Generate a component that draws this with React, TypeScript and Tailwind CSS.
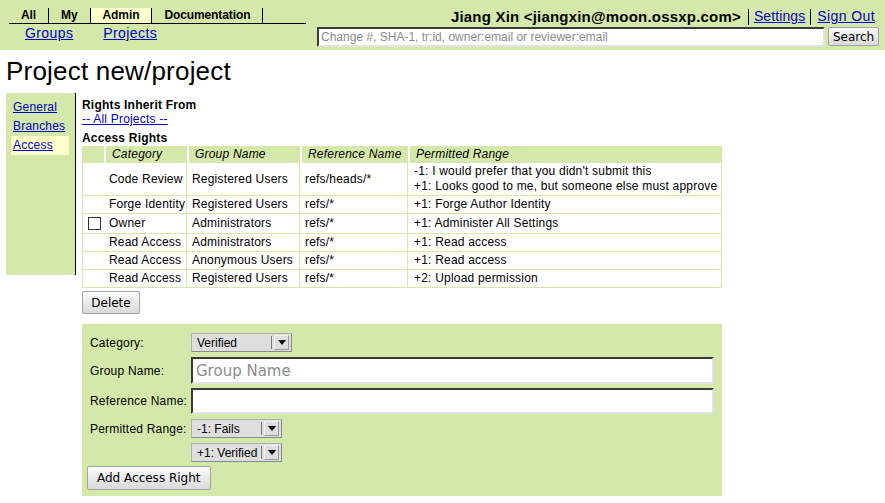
import React from "react";

const TABS = [
  { label: "All" },
  { label: "My" },
  { label: "Admin", active: true },
  { label: "Documentation" },
];

const RIGHTS = [
  { cat: "Code Review", group: "Registered Users", ref: "refs/heads/*", range: ["-1: I would prefer that you didn't submit this", "+1: Looks good to me, but someone else must approve"] },
  { cat: "Forge Identity", group: "Registered Users", ref: "refs/*", range: ["+1: Forge Author Identity"] },
  { cat: "Owner", group: "Administrators", ref: "refs/*", range: ["+1: Administer All Settings"], check: true },
  { cat: "Read Access", group: "Administrators", ref: "refs/*", range: ["+1: Read access"] },
  { cat: "Read Access", group: "Anonymous Users", ref: "refs/*", range: ["+1: Read access"] },
  { cat: "Read Access", group: "Registered Users", ref: "refs/*", range: ["+2: Upload permission"] },
];

const btn =
  "rounded-[2px] border border-[#a4a4a4] bg-linear-to-b from-[#fbfbfb] to-[#d9d9d9] font-['DejaVu_Sans',sans-serif] text-[12px] tracking-normal text-black";
const inset =
  "border-2 border-t-[#3a3a3a] border-l-[#3a3a3a] border-b-[#e2e2e2] border-r-[#e2e2e2] bg-white outline-none";

function FakeSelect({ label, className }: { label: string; className: string }) {
  return (
    <div className={`flex items-center border border-[#b0b0b0] border-b-[#8a8a8a] border-r-[#8a8a8a] bg-[#dedede] text-[12px] tracking-normal ${className}`}>
      <span className="flex-1 whitespace-nowrap pl-[5px]">{label}</span>
      <span className="h-[13px] w-px bg-[#7a7a7a]" />
      <span className="mx-[2px] flex h-[15px] w-[15px] items-center justify-center border border-[#f2f2f2] border-b-[#9a9a9a] border-r-[#9a9a9a]">
        <span className="h-0 w-0 border-x-[4px] border-t-[5px] border-x-transparent border-t-black" />
      </span>
    </div>
  );
}

export default function App() {
  return (
    <div className="min-h-screen bg-white font-['Liberation_Sans',Arial,sans-serif] text-black">
      {/* top header */}
      <div className="flex h-[50px] justify-between bg-[#d4e9a9]">
        <div className="pl-[9px] pt-[8px]">
          <div className="flex w-[297px] border-b border-black">
            {TABS.map(t => (
              <span
                key={t.label}
                className={`h-[15px] border-r border-black px-3 text-[12px] font-bold leading-[15px] tracking-[-0.1px] ${t.active ? "bg-[#ffffcc]" : ""}`}
              >
                {t.label}
              </span>
            ))}
          </div>
          <div className="mt-[1px] flex gap-[30px] pl-[16px] text-[14px] leading-[17px] tracking-[0.4px]">
            <a className="text-[#0000cc] underline">Groups</a>
            <a className="text-[#0000cc] underline">Projects</a>
          </div>
        </div>
        <div className="flex flex-col items-end pr-[6px] pt-[8px]">
          <div className="flex h-[17px] items-center pr-[4px] text-[14px] leading-[17px]">
            <span className="text-[15px] font-bold tracking-[0.2px]">Jiang Xin &lt;jiangxin@moon.ossxp.com&gt;</span>
            <span className="ml-[7px] h-[16px] w-px bg-black" />
            <a className="ml-[5px] text-[#0000cc] underline tracking-[0.1px]">Settings</a>
            <span className="ml-[5px] h-[16px] w-px bg-black" />
            <a className="ml-[6px] text-[#0000cc] underline tracking-[0.4px]">Sign Out</a>
          </div>
          <div className="mt-[2px] flex items-start">
            <input
              className={`h-[20px] w-[508px] px-[2px] text-[12px] placeholder:text-[#8c8c8c] ${inset}`}
              placeholder="Change #, SHA-1, tr:id, owner:email or reviewer:email"
            />
            <button className={`ml-[3px] h-[19px] w-[51px] ${btn}`}>Search</button>
          </div>
        </div>
      </div>

      <h1 className="mt-[7px] pl-[6px] text-[26px] leading-[28px] tracking-[0.2px]">Project new/project</h1>

      <div className="mt-[8px] flex">
        {/* side nav */}
        <div className="ml-[6px] h-[182px] w-[70px] shrink-0 border-r border-black bg-[#d4e9a9] pl-[5px] pt-[5px] text-[12px] leading-[19px] tracking-[0.2px]">
          <a className="block w-[58px] px-[2px] text-[#0000cc] underline">General</a>
          <a className="block w-[58px] px-[2px] text-[#0000cc] underline">Branches</a>
          <a className="block w-[58px] bg-[#ffffcc] px-[2px] text-[#0000cc] underline">Access</a>
        </div>

        {/* main */}
        <div className="ml-[6px] pt-[5px] text-[12px] tracking-[0.2px]">
          <div className="font-bold leading-[14px]">Rights Inherit From</div>
          <a className="block leading-[14px] text-[#0000cc] underline">-- All Projects --</a>
          <div className="mt-[5px] font-bold leading-[14px]">Access Rights</div>

          <table className="mt-[1px] w-[640px] table-fixed border-separate border-spacing-0 leading-[15px]">
            <colgroup>
              <col className="w-[22px]" />
              <col className="w-[83px]" />
              <col className="w-[113px]" />
              <col className="w-[108px]" />
              <col className="w-[314px]" />
            </colgroup>
            <thead>
              <tr className="bg-[#d4e9a9] text-left italic">
                <th className="py-[1px] font-normal" />
                <th className="border-l-2 border-white py-[1px] pl-[6px] font-normal">Category</th>
                <th className="border-l-2 border-white py-[1px] pl-[6px] font-normal">Group Name</th>
                <th className="border-l-2 border-white py-[1px] pl-[6px] font-normal">Reference Name</th>
                <th className="border-l-2 border-white py-[1px] pl-[6px] font-normal">Permitted Range</th>
              </tr>
            </thead>
            <tbody>
              {RIGHTS.map((r, i) => (
                <tr key={i}>
                  <td className="border-b border-l border-[#d4e9a9] py-[1px] pl-[5px] align-middle">
                    {r.check && <div className="my-[2px] h-[13px] w-[13px] border border-[#333] bg-white" />}
                  </td>
                  <td className="truncate border-b border-r border-[#d4e9a9] py-[1px] pl-[5px] align-middle">{r.cat}</td>
                  <td className="truncate border-b border-r border-[#d4e9a9] py-[1px] pl-[5px] align-middle">{r.group}</td>
                  <td className="truncate border-b border-r border-[#d4e9a9] py-[1px] pl-[5px] align-middle">{r.ref}</td>
                  <td className="border-b border-r border-[#d4e9a9] py-[1px] pl-[6px] align-middle">
                    {r.range.map(line => (
                      <div key={line} className="whitespace-nowrap">{line}</div>
                    ))}
                  </td>
                </tr>
              ))}
            </tbody>
          </table>

          <button className={`mt-[3px] h-[23px] w-[58px] ${btn}`}>Delete</button>

          {/* add access right */}
          <div className="mt-[10px] w-[640px] bg-[#d4e9a9] px-[8px] pb-[6px] pt-[9px]">
            <div className="flex items-center">
              <span className="w-[101px] shrink-0">Category:</span>
              <FakeSelect label="Verified" className="h-[19px] w-[101px]" />
            </div>
            <div className="mt-[5px] flex items-center">
              <span className="w-[101px] shrink-0">Group Name:</span>
              <input
                className={`h-[27px] flex-1 px-[3px] font-['DejaVu_Sans',sans-serif] text-[15px] tracking-normal placeholder:text-[#8c8c8c] ${inset}`}
                placeholder="Group Name"
              />
            </div>
            <div className="mt-[4px] flex items-center">
              <span className="w-[101px] shrink-0">Reference Name:</span>
              <input className={`h-[26px] flex-1 px-[3px] text-[13px] ${inset}`} />
            </div>
            <div className="mt-[5px] flex items-center">
              <span className="w-[101px] shrink-0">Permitted Range:</span>
              <FakeSelect label="-1: Fails" className="h-[19px] w-[91px]" />
            </div>
            <div className="mt-[5px] flex items-center">
              <span className="w-[101px] shrink-0" />
              <FakeSelect label="+1: Verified" className="h-[19px] w-[91px]" />
            </div>
            <button className={`-ml-[3px] mt-[4px] h-[24px] px-[9px] ${btn}`}>Add Access Right</button>
          </div>
        </div>
      </div>
    </div>
  );
}
